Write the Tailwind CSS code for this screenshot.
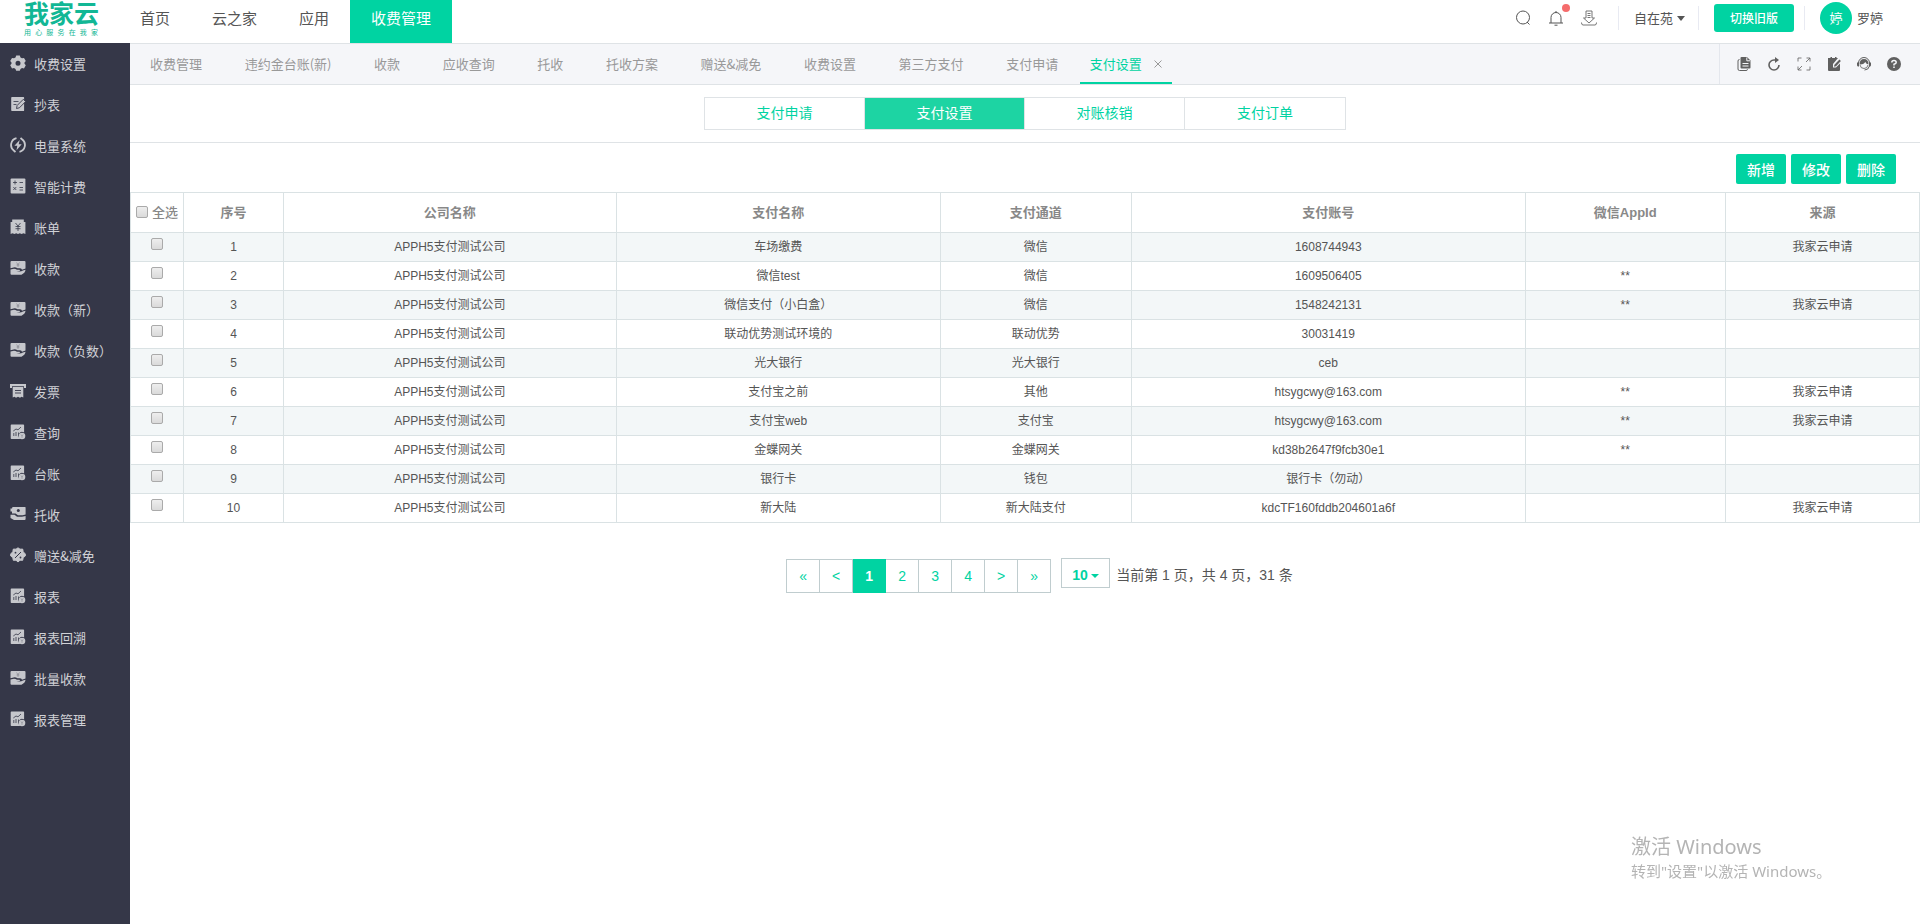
<!DOCTYPE html>
<html lang="zh-CN">
<head>
<meta charset="utf-8">
<meta name="viewport" content="width=device-width, initial-scale=1">
<title>支付设置 - 我家云</title>
<script src="https://cdn.jsdelivr.net/npm/@tailwindcss/browser@4"></script>
</head>
<body class="flex min-h-screen flex-col bg-white font-['Noto_Sans_CJK_SC',sans-serif] text-[#555]">

<!-- Icon sprite -->
<svg class="hidden" aria-hidden="true">
  <symbol id="i-gear" viewBox="0 0 16 16"><path fill="currentColor" fill-rule="evenodd" d="M6.200.500H9.800L10.500 2.400 12 3.200 14 2.900 15.800 6 14.500 7.500V8.800L15.800 10.300 14 13.400 12 13.100 10.500 13.900 9.800 15.800H6.200L5.500 13.900 4 13.100 2 13.400.2 10.300 1.500 8.800V7.500L.2 6 2 2.900 4 3.200 5.500 2.400ZM8 5.700a2.500 2.500 0 1 0 0 5 2.500 2.500 0 0 0 0-5Z"/></symbol>
  <symbol id="i-edit" viewBox="0 0 16 16"><path fill="currentColor" d="M2 1h11.500a.6.600 0 0 1 .6.600V14.400a.6.600 0 0 1-.6.600H2a.8.800 0 0 1-.8-.8V1.800A.8.800 0 0 1 2 1Z"/><path stroke="#353748" stroke-width=".8" d="M3.500 5.500h5M3.500 8.500h3"/><path fill="currentColor" stroke="#353748" stroke-width=".9" d="m6.500 12.500.6-3 6.200-6.200 2.300 2.300-6.200 6.200Z"/></symbol>
  <symbol id="i-bolt" viewBox="0 0 16 16"><g fill="none" stroke="currentColor" stroke-width="1.800"><path d="M6.500 1.200A7 7 0 0 0 4 13.700L5.500 15M9.500 14.800A7 7 0 0 0 12 2.300L10.500 1"/></g><path fill="currentColor" d="M9.700 3 4.400 8.800h2.900l-.8 4.400 5.200-6H8.700Z"/></symbol>
  <symbol id="i-calc" viewBox="0 0 16 16"><rect x=".6" y=".6" width="14.800" height="14.800" rx="1" fill="currentColor"/><path fill="none" stroke="#353748" stroke-width=".8" d="M3 4.500h4M5 2.500v4M9.500 4.500H13M3.300 9l3 3M6.300 9l-3 3M9.500 9.500H13M9.500 12H13"/></symbol>
  <symbol id="i-bill" viewBox="0 0 16 16"><path fill="currentColor" d="M2.200.5h11.600V3h1.600v12l-1.900-.8-1.900.8-1.800-.8-1.800.8-1.800-.8-1.800.8-1.900-.8-1.900.8V3h1.600Z"/><path fill="none" stroke="#353748" stroke-width=".8" d="M5.500 4 8 7l2.500-3M8 7v5M5.500 7.500h5M5.500 9.700h5"/></symbol>
  <symbol id="i-pay" viewBox="0 0 16 16"><path fill="currentColor" d="M1.500 1h13a1 1 0 0 1 1 1v6.500l-3.500 1.200Q11.500 8.300 9.500 8.300H7.500Q5.500 7 3.500 7.500L.5 8.200V2a1 1 0 0 1 1-1Z"/><path fill="currentColor" d="M.5 9.500 4 8.800q1.500 0 3 1h2.500q1.200.5 0 1.300H6.500q4 1 6.500-.6l2.500-.8q0 2.800-4 5H1.500a1 1 0 0 1-1-1Z"/><path fill="none" stroke="#353748" stroke-opacity=".6" stroke-width=".5" d="m6.500 2.500 1.500 2 1.500-2M8 4.500v2.500M6.500 5h3"/></symbol>
  <symbol id="i-ticket" viewBox="0 0 16 16"><path fill="currentColor" d="M0 1h16v4h-2V3.200H2V5H0Z"/><path fill="currentColor" d="M2.700 4h10.600V14.500l-1.800-.8-1.500 1.100-2-1-2 1-1.500-1.100-1.800.8Z"/><path stroke="#353748" stroke-width=".9" d="M5 7.500h6M5 10h6"/></symbol>
  <symbol id="i-report" viewBox="0 0 16 16"><path fill="currentColor" d="M1.500.5h11.800a.8.800 0 0 1 .8.800V8.600a3.500 3.500 0 0 0-4 5.900v.5H1.500a.8.800 0 0 1-.8-.8V1.300a.8.800 0 0 1 .8-.8Z"/><path fill="none" stroke="#353748" stroke-width=".8" d="M3.800 12V9M6 12V8M3.300 7 6 5l2 .8L11 3M8.500 12V8.500"/><circle cx="12" cy="12" r="3.300" fill="currentColor"/><path fill="none" stroke="#353748" stroke-opacity=".6" stroke-width=".5" d="m11 10.500 1 1.300 1-1.300M12 11.800v2"/></symbol>
  <symbol id="i-collect" viewBox="0 0 16 16"><path fill="currentColor" d="M2.500 1H15a.6.600 0 0 1 .6.600V8.500l-3 .8H8L5.500 7.500H2V5.500H.5v-3H2Z"/><path fill="currentColor" d="M.5 8.800h4l2.500 2h5l3.600-.8v3a1 1 0 0 1-1 1H4L.5 12Z"/><circle cx="8.300" cy="4.500" r="1.500" fill="#353748"/></symbol>
  <symbol id="i-gift" viewBox="0 0 16 16"><path fill="currentColor" stroke="currentColor" stroke-linejoin="round" d="m8 .8 2 1.400 2.700-.1.500 2.600L15.300 7v2l-2.100 1.600-.5 2.700-2.700-.1L8 15l-2-1.800-2.700.1-.5-2.700L.7 9V7l2.100-2.300.5-2.600 2.700.1Z"/><path stroke="#353748" d="m5 11 6-6"/><circle cx="5.500" cy="5.700" r=".9" fill="#353748"/><circle cx="10.500" cy="10.500" r=".9" fill="#353748"/></symbol>
</svg>

<header class="flex h-[43px] shrink-0 items-start bg-white">
  <a href="#" class="flex w-[119px] shrink-0 flex-col pl-6 font-['Liberation_Sans','Noto_Sans_CJK_SC',sans-serif] text-[#12b795]" aria-label="我家云">
    <span class="text-[25px] leading-[29px] font-bold">我家云</span>
    <span class="flex w-[74px] justify-between text-[7px] leading-[8px]"><span>用</span><span>心</span><span>服</span><span>务</span><span>在</span><span>我</span><span>家</span></span>
  </a>
  <nav class="flex text-[15px] leading-[36px] text-[#555]">
    <a href="#" class="h-[43px] px-[21px]">首页</a>
    <a href="#" class="h-[43px] px-[21px]">云之家</a>
    <a href="#" class="h-[43px] px-[21px]">应用</a>
    <a href="#" class="h-[43px] bg-[#00d3a2] px-[21px] text-white">收费管理</a>
  </nav>
  <div class="ml-auto flex h-9 items-center pr-[37px] text-[13px]">
    <div class="flex gap-[17px]">
      <button type="button" aria-label="搜索"><svg class="size-4" viewBox="0 0 16 16" fill="none" stroke="#555"><circle cx="8" cy="7.500" r="6.500"/><path d="m12 12 2.500 2.500"/></svg></button>
      <button type="button" aria-label="通知" class="relative"><svg class="size-4" viewBox="0 0 16 16" fill="none" stroke="#555"><path d="M1 13h14M3 13V7.500a5 5 0 0 1 10 0V13M8 2.500V1M6.500 15.200h3"/></svg><span class="absolute -top-[6px] -right-[6px] size-2 rounded-full bg-[#f56c6c]"></span></button>
      <button type="button" aria-label="下载"><svg class="size-4" viewBox="0 0 16 16" fill="none" stroke="#666" stroke-width=".9"><path d="M5 1h6v7h2.500L8 13 2.500 8H5ZM6.500 3.500h3M6.500 5.500h3M6.500 7.500h3M.5 12.500Q.5 15 2 15h12q1.500 0 1.500-2.500"/></svg></button>
    </div>
    <span class="ml-[21px] h-6 w-px bg-[#e8eaf2]"></span>
    <button type="button" class="ml-[15px] flex items-center gap-1">自在苑<svg class="h-[5px] w-2" viewBox="0 0 8 5"><path fill="#555" d="M0 0h8L4 5Z"/></svg></button>
    <span class="ml-[13px] h-6 w-px bg-[#e8eaf2]"></span>
    <button type="button" class="ml-[15px] h-7 w-20 rounded-[3px] bg-[#00d3a2] text-xs font-medium text-white">切换旧版</button>
    <span class="ml-[10px] h-6 w-px bg-[#e8eaf2]"></span>
    <a href="#" class="ml-[15px] flex items-center gap-[5px]"><span class="flex size-8 items-center justify-center rounded-full bg-[#00d3a2] text-white">婷</span>罗婷</a>
  </div>
</header>

<div class="flex flex-1">
  <aside class="w-[130px] shrink-0 bg-[#353748]">
    <nav class="flex flex-col text-[13px] leading-[41px] text-[#d0d1d6] [&_a]:flex [&_a]:h-[41px] [&_a]:items-center [&_a]:gap-2 [&_a]:pl-[10px] [&_svg]:mb-[2px] [&_svg]:size-4 [&_svg]:shrink-0 [&_svg]:text-[#c6c7cc]">
      <a href="#"><svg><use href="#i-gear"/></svg>收费设置</a>
      <a href="#"><svg><use href="#i-edit"/></svg>抄表</a>
      <a href="#"><svg><use href="#i-bolt"/></svg>电量系统</a>
      <a href="#"><svg><use href="#i-calc"/></svg>智能计费</a>
      <a href="#"><svg><use href="#i-bill"/></svg>账单</a>
      <a href="#"><svg><use href="#i-pay"/></svg>收款</a>
      <a href="#"><svg><use href="#i-pay"/></svg>收款（新）</a>
      <a href="#"><svg><use href="#i-pay"/></svg>收款（负数）</a>
      <a href="#"><svg><use href="#i-ticket"/></svg>发票</a>
      <a href="#"><svg><use href="#i-report"/></svg>查询</a>
      <a href="#"><svg><use href="#i-report"/></svg>台账</a>
      <a href="#"><svg><use href="#i-collect"/></svg>托收</a>
      <a href="#"><svg><use href="#i-gift"/></svg>赠送&amp;减免</a>
      <a href="#"><svg><use href="#i-report"/></svg>报表</a>
      <a href="#"><svg><use href="#i-report"/></svg>报表回溯</a>
      <a href="#"><svg><use href="#i-pay"/></svg>批量收款</a>
      <a href="#"><svg><use href="#i-report"/></svg>报表管理</a>
    </nav>
  </aside>

  <main class="min-w-0 flex-1 border-t border-[#dfe3e6]">
    <div class="flex h-[41px] border-b border-[#dfe3e6] bg-[#f5f6f9]">
      <nav class="flex w-[1042px] justify-between text-[13px] leading-[40px] whitespace-nowrap text-[#999]">
        <a href="#" class="pr-[21px] pl-5">收费管理</a>
        <a href="#" class="px-[21px]">违约金台账(新)</a>
        <a href="#" class="px-[21px]">收款</a>
        <a href="#" class="px-[21px]">应收查询</a>
        <a href="#" class="px-[21px]">托收</a>
        <a href="#" class="px-[21px]">托收方案</a>
        <a href="#" class="px-[21px]">赠送&amp;减免</a>
        <a href="#" class="px-[21px]">收费设置</a>
        <a href="#" class="px-[21px]">第三方支付</a>
        <a href="#" class="px-[21px]">支付申请</a>
        <span class="flex items-center gap-3 px-[10px] inset-shadow-[0_-2px_0_#00d3a2]">
          <a href="#" aria-current="page" class="text-[#00d3a2]">支付设置</a>
          <button type="button" aria-label="关闭"><svg class="size-2" viewBox="0 0 8 8" stroke="#999" fill="none"><path d="m.5.5 7 7M7.500.5l-7 7"/></svg></button>
        </span>
      </nav>
      <div class="ml-auto flex items-center gap-4 border-l border-[#e4e7ed] pr-[19px] pl-[17px] text-[#606060] [&_svg]:size-[14px]">
        <button type="button" aria-label="复制"><svg viewBox="0 0 14 14"><path fill="none" stroke="currentColor" d="M2.500 2.500q-1.500 0-1.500 1.500v8q0 1.500 1.500 1.500h6.500q1.500 0 1.500-1.200"/><path fill="currentColor" d="M4.500 0H10l3.500 3.500V10.500a1 1 0 0 1-1 1h-8a1 1 0 0 1-1-1V1a1 1 0 0 1 1-1Z"/><path stroke="#f5f6f9" d="M5.500 6.500h6M5.500 9h6M9.800.5v3.300h3.400" fill="none"/></svg></button>
        <button type="button" aria-label="刷新"><svg viewBox="0 0 14 14"><path fill="none" stroke="currentColor" stroke-width="1.600" d="M8.500 3H7a5 5 0 1 0 5 5"/><path fill="currentColor" d="M8 0v6l4-3Z"/></svg></button>
        <button type="button" aria-label="全屏"><svg viewBox="0 0 14 14"><path fill="none" stroke="currentColor" stroke-opacity=".8" d="M1 4.500V1h3.500M9.500 1H13v3.500M13 9.500V13H9.500M4.500 13H1V9.500M13 1 9 5M1 13l4-4"/></svg></button>
        <button type="button" aria-label="记录"><svg viewBox="0 0 14 14"><path fill="currentColor" d="M1 1h2.500V0H5v1h3V0h1.500v1H11L6 7v3.500h3l4-4V13a1 1 0 0 1-1 1H2a1 1 0 0 1-1-1Z"/><path fill="currentColor" d="m7 9.800.4-2 5-5.200 1.500 1.500L9 9.300Z"/></svg></button>
        <button type="button" aria-label="客服"><svg viewBox="0 0 14 14"><path fill="none" stroke="currentColor" d="M1.500 6a5.500 5.500 0 0 1 11 0M12.500 9q-1 4-5 4"/><path fill="currentColor" d="M0 5.500h2v4H1q-1-.5-1-1.500ZM14 5.500h-2v4h1q1-.5 1-1.500ZM2.500 7.500Q2.500 2 7 2t4.500 5.500Q9 7 8.500 5 6 8 2.500 7.500Z"/><path fill="none" stroke="currentColor" stroke-width=".8" d="M3 8q.5 3.500 4 3.500T11 8"/></svg></button>
        <button type="button" aria-label="帮助"><svg viewBox="0 0 14 14"><circle cx="7" cy="7" r="7" fill="currentColor"/><path fill="none" stroke="#f5f6f9" stroke-width="1.500" d="M4.800 5.500Q4.800 3.600 7 3.600T9.200 5.400Q9.200 6.500 7 7.300V8.500M7 9.500V11"/></svg></button>
      </div>
    </div>

    <div class="flex justify-center border-b border-[#dfe3e6] pt-3 pb-3">
      <nav class="grid h-[33px] w-[642px] grid-cols-4 divide-x divide-[#dfe3e6] border border-[#dfe3e6] text-center text-sm leading-[29px] text-[#00d3a2]">
        <a href="#">支付申请</a>
        <a href="#" aria-current="page" class="bg-[#1dd4a3] text-white">支付设置</a>
        <a href="#">对账核销</a>
        <a href="#">支付订单</a>
      </nav>
    </div>

    <div class="flex justify-end gap-[5px] py-[11px] pr-6 pb-2 text-sm font-medium text-white">
      <button type="button" class="h-[30px] w-[50px] rounded-xs bg-[#00d3a2]">新增</button>
      <button type="button" class="h-[30px] w-[50px] rounded-xs bg-[#00d3a2]">修改</button>
      <button type="button" class="h-[30px] w-[50px] rounded-xs bg-[#00d3a2]">删除</button>
    </div>

    <table class="w-full table-fixed border-collapse text-center font-['Liberation_Sans','Noto_Sans_CJK_SC',sans-serif] text-xs text-[#555] [&_input]:size-3 [&_input]:appearance-none [&_input]:rounded-[2px] [&_input]:border [&_input]:border-[#aaa] [&_input]:bg-linear-to-b [&_input]:from-[#eee] [&_input]:to-[#dadada] [&_td]:h-[29px] [&_td]:border [&_td]:border-[#dae2e4] [&_th]:h-10 [&_th]:border [&_th]:border-[#dae2e4] [&_tbody_input]:mb-[6px] [&_tbody_input]:block [&_tbody_input]:mx-auto [&_tbody_tr]:odd:bg-[#f3f7f8]">
      <colgroup>
        <col class="w-[53px]"><col class="w-[100px]"><col class="w-[18.6%]"><col class="w-[18.1%]"><col class="w-[10.7%]"><col class="w-[22%]"><col class="w-[11.2%]"><col>
      </colgroup>
      <thead class="text-[13px] text-[#888]">
        <tr>
          <th class="font-medium"><label class="flex items-center justify-center gap-1"><input type="checkbox">全选</label></th>
          <th>序号</th><th>公司名称</th><th>支付名称</th><th>支付通道</th><th>支付账号</th><th>微信AppId</th><th>来源</th>
        </tr>
      </thead>
      <tbody>
        <tr><td><input type="checkbox" aria-label="选择 1"></td><td>1</td><td>APPH5支付测试公司</td><td>车场缴费</td><td>微信</td><td>1608744943</td><td></td><td>我家云申请</td></tr>
        <tr><td><input type="checkbox" aria-label="选择 2"></td><td>2</td><td>APPH5支付测试公司</td><td>微信test</td><td>微信</td><td>1609506405</td><td>**</td><td></td></tr>
        <tr><td><input type="checkbox" aria-label="选择 3"></td><td>3</td><td>APPH5支付测试公司</td><td>微信支付（小白盒）</td><td>微信</td><td>1548242131</td><td>**</td><td>我家云申请</td></tr>
        <tr><td><input type="checkbox" aria-label="选择 4"></td><td>4</td><td>APPH5支付测试公司</td><td>联动优势测试环境的</td><td>联动优势</td><td>30031419</td><td></td><td></td></tr>
        <tr><td><input type="checkbox" aria-label="选择 5"></td><td>5</td><td>APPH5支付测试公司</td><td>光大银行</td><td>光大银行</td><td>ceb</td><td></td><td></td></tr>
        <tr><td><input type="checkbox" aria-label="选择 6"></td><td>6</td><td>APPH5支付测试公司</td><td>支付宝之前</td><td>其他</td><td>htsygcwy@163.com</td><td>**</td><td>我家云申请</td></tr>
        <tr><td><input type="checkbox" aria-label="选择 7"></td><td>7</td><td>APPH5支付测试公司</td><td>支付宝web</td><td>支付宝</td><td>htsygcwy@163.com</td><td>**</td><td>我家云申请</td></tr>
        <tr><td><input type="checkbox" aria-label="选择 8"></td><td>8</td><td>APPH5支付测试公司</td><td>金蝶网关</td><td>金蝶网关</td><td>kd38b2647f9fcb30e1</td><td>**</td><td></td></tr>
        <tr><td><input type="checkbox" aria-label="选择 9"></td><td>9</td><td>APPH5支付测试公司</td><td>银行卡</td><td>钱包</td><td>银行卡（勿动）</td><td></td><td></td></tr>
        <tr><td><input type="checkbox" aria-label="选择 10"></td><td>10</td><td>APPH5支付测试公司</td><td>新大陆</td><td>新大陆支付</td><td>kdcTF160fddb204601a6f</td><td></td><td>我家云申请</td></tr>
      </tbody>
    </table>

    <div class="flex items-start justify-center pt-[35px] pl-[29px] font-['Liberation_Sans','Noto_Sans_CJK_SC',sans-serif] text-sm text-[#00d3a2]">
      <nav aria-label="分页" class="mt-px flex border-l border-[#c0cdcf] text-center leading-8 [&_a]:w-[33px] [&_a]:border-y [&_a]:border-r [&_a]:border-[#c0cdcf]">
        <a href="#">«</a>
        <a href="#">&lt;</a>
        <a href="#" aria-current="page" class="border-[#00d3a2]! bg-[#00d3a2] font-bold text-white">1</a>
        <a href="#">2</a>
        <a href="#">3</a>
        <a href="#">4</a>
        <a href="#">&gt;</a>
        <a href="#">»</a>
      </nav>
      <div class="relative ml-[10px]">
        <select aria-label="每页条数" class="block h-[30px] w-[49px] appearance-none border border-[#c0cdcf] bg-white pt-[3px] pl-[10px] font-bold text-[#00d3a2]"><option>10</option><option>20</option><option>50</option></select>
        <svg class="pointer-events-none absolute top-4 right-[11px] h-1 w-2" viewBox="0 0 8 4"><path fill="currentColor" d="M0 0h8L4 4Z"/></svg>
      </div>
      <p class="ml-[6px] leading-[34px] text-[#555]">当前第 1 页，共 4 页，31 条</p>
    </div>
  </main>
</div>

<div class="pointer-events-none fixed right-[94px] bottom-[42px] w-[195px] whitespace-nowrap font-['Noto_Sans','Noto_Sans_CJK_SC',sans-serif] text-[#b4b4b4]">
  <p class="text-xl leading-[26px]">激活 Windows</p>
  <p class="text-[15px] leading-[22px]">转到"设置"以激活 Windows。</p>
</div>
</body>
</html>
